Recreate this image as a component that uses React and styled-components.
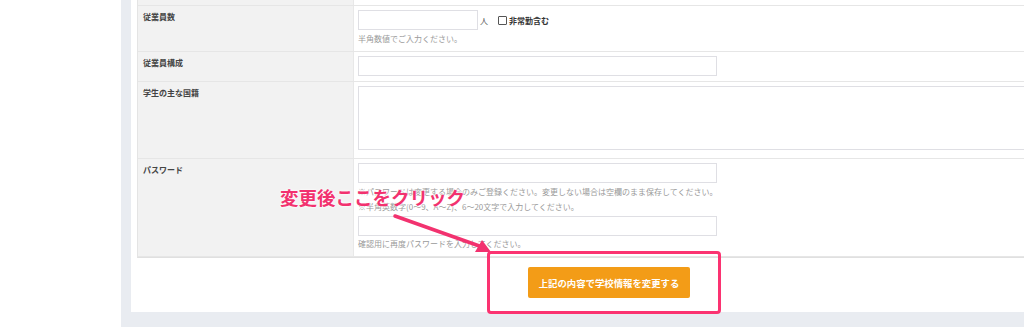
import styled, { createGlobalStyle } from "styled-components";

const GlobalStyle = createGlobalStyle`
  html, body {
    margin: 0;
    padding: 0;
    background: #ffffff;
    overflow: hidden;
  }
  body {
    font-family: "Noto Sans CJK JP", "Noto Sans", sans-serif;
    color: #333;
  }
`;

const Page = styled.div`
  display: flex;
  width: 1100px;
  height: 327px;
`;

const Sidebar = styled.div`
  width: 121px;
  flex-shrink: 0;
  background: #ffffff;
`;

const Main = styled.div`
  flex: 1;
  background: #e9ecf1;
  padding: 0 0 15px 10px;
  position: relative;
`;

const Panel = styled.div`
  width: 956px;
  height: 312px;
  background: #ffffff;
  padding: 0 6px;
  box-sizing: border-box;
`;

const Table = styled.div`
  border-left: 1px solid #e4e4e4;
  border-bottom: 1px solid #e0e0e0;
`;

const Row = styled.div`
  display: grid;
  grid-template-columns: 216px 1fr;
  border-bottom: 1px solid #e6e6e6;
  min-height: ${(p) => p.$min || 0}px;
`;

const Label = styled.div`
  background: #f2f2f2;
  border-right: 1px solid #e8e8e8;
  padding: 5px 5px;
  font-size: 8px;
  line-height: 12px;
  font-weight: 700;
  color: #444;
`;

const Value = styled.div`
  padding: 4px 4px ${(p) => p.$pb || 5}px;
  font-size: 8px;
  line-height: 15px;
`;

const Line = styled.div`
  display: flex;
  align-items: center;
`;

const Input = styled.div`
  width: ${(p) => p.$w}px;
  height: 20px;
  box-sizing: border-box;
  border: 1px solid #dfdfe4;
  background: #fff;
  margin-top: ${(p) => p.$mt || 0}px;
`;

const TextArea = styled.div`
  width: 800px;
  height: 64px;
  box-sizing: border-box;
  border: 1px solid #dfdfe4;
  background: #fff;
`;

const Unit = styled.span`
  margin-left: 2px;
  color: #555;
  font-size: 8px;
`;

const Check = styled.span`
  display: inline-flex;
  align-items: center;
  margin-left: 10px;
  font-weight: 700;
  color: #333;
  &::before {
    content: "";
    width: 7px;
    height: 7px;
    border: 1px solid #555;
    border-radius: 1px;
    margin-right: 2px;
  }
`;

const Hint = styled.div`
  color: #9a9a9a;
  font-size: 8px;
  line-height: 15px;
  margin-top: ${(p) => (p.$mt === undefined ? 1 : p.$mt)}px;
  white-space: nowrap;
`;

const Footer = styled.div`
  display: flex;
  justify-content: center;
  padding-top: 9px;
`;

const Submit = styled.button`
  width: 162px;
  height: 31px;
  border: none;
  border-radius: 2px;
  background: #f39c17;
  color: #fff;
  font-family: "Noto Sans CJK JP", sans-serif;
  font-weight: 700;
  font-size: 9.4px;
  cursor: pointer;
`;

const Callout = styled.div`
  position: absolute;
  left: 159px;
  top: 184px;
  color: #f2326f;
  font-size: 18.5px;
  font-weight: 700;
  line-height: 26px;
  white-space: nowrap;
  text-shadow: 0 0 3px #fff, 0 0 2px #fff;
`;

const Frame = styled.div`
  position: absolute;
  left: 366px;
  top: 251px;
  width: 234px;
  height: 63px;
  box-sizing: border-box;
  border: 3px solid #fb3371;
  border-radius: 4px;
`;

const Arrow = styled.svg`
  position: absolute;
  left: 260px;
  top: 200px;
  overflow: visible;
`;

export default function App() {
  return (
    <>
      <GlobalStyle />
      <Page>
        <Sidebar />
        <Main>
          <Panel>
            <Table>
              <Row $min={5}>
                <Label style={{ padding: 0 }} />
                <div />
              </Row>
              <Row>
                <Label>従業員数</Label>
                <Value>
                  <Line>
                    <Input $w={120} />
                    <Unit>人</Unit>
                    <Check>非常勤含む</Check>
                  </Line>
                  <Hint>半角数値でご入力ください。</Hint>
                </Value>
              </Row>
              <Row>
                <Label>従業員構成</Label>
                <Value>
                  <Input $w={359} />
                </Value>
              </Row>
              <Row>
                <Label>学生の主な国籍</Label>
                <Value $pb={8}>
                  <TextArea />
                </Value>
              </Row>
              <Row>
                <Label>パスワード</Label>
                <Value>
                  <Input $w={359} />
                  <Hint>
                    ※パスワードは変更する場合のみご登録ください。変更しない場合は空欄のまま保存してください。
                    <br />
                    ※半角英数字(0～9、A～Z)、6～20文字で入力してください。
                  </Hint>
                  <Input $w={359} $mt={2} />
                  <Hint $mt={0}>確認用に再度パスワードを入力してください。</Hint>
                </Value>
              </Row>
            </Table>
            <Footer>
              <Submit>上記の内容で学校情報を変更する</Submit>
            </Footer>
          </Panel>
          <Arrow width="120" height="60">
            <line x1="14" y1="16" x2="104" y2="48" stroke="#f2326f" strokeWidth="3.5" strokeLinecap="round" />
            <polygon points="110,52 94,52 101,40" fill="#f2326f" />
          </Arrow>
          <Callout>変更後ここをクリック</Callout>
          <Frame />
        </Main>
      </Page>
    </>
  );
}
